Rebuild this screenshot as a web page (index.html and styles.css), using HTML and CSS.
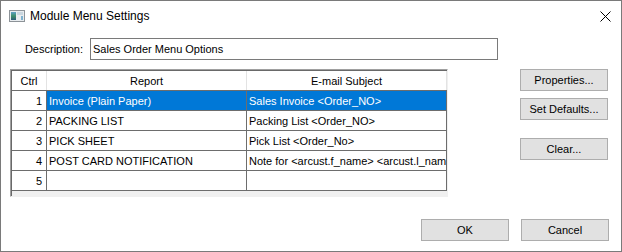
FILE: index.html
```html
<!DOCTYPE html>
<html lang="en">
<head>
  <meta charset="UTF-8">
  <title>Module Menu Settings</title>
  <link rel="stylesheet" href="styles.css">
</head>
<body>
  <div class="window">
    <div class="titlebar">
      <svg class="app-icon" width="16" height="12" viewBox="0 0 16 12">
        <defs>
          <linearGradient id="pane" x1="0" y1="0" x2="0" y2="1">
            <stop offset="0" stop-color="#5fa0c8"/>
            <stop offset="0.5" stop-color="#3d8f6a"/>
            <stop offset="1" stop-color="#2c5a7a"/>
          </linearGradient>
        </defs>
        <rect x="0.5" y="0.5" width="15" height="11" fill="#e8ecef" stroke="#8d9398"/>
        <rect x="2" y="2" width="5" height="8" fill="url(#pane)"/>
        <rect x="8" y="2" width="6" height="3" fill="#c9d6df"/>
        <rect x="12" y="6" width="2" height="4" fill="#7fb2cf"/>
      </svg>
      <span class="title">Module Menu Settings</span>
      <svg class="close" width="11" height="11" viewBox="0 0 11 11">
        <path d="M0.5 0.5 L10.5 10.5 M10.5 0.5 L0.5 10.5" stroke="#000" stroke-width="1"/>
      </svg>
    </div>

    <div class="content">
      <div class="desc-row">
        <label class="desc-label">Description:</label>
        <div class="textbox">Sales Order Menu Options</div>
      </div>

      <div class="main">
        <div class="grid">
          <table>
            <thead>
              <tr>
                <th class="col-ctrl">Ctrl</th>
                <th class="col-report">Report</th>
                <th class="col-subject">E-mail Subject</th>
              </tr>
            </thead>
            <tbody>
              <tr class="selected">
                <td class="num">1</td>
                <td>Invoice (Plain Paper)</td>
                <td>Sales Invoice &lt;Order_NO&gt;</td>
              </tr>
              <tr>
                <td class="num">2</td>
                <td>PACKING LIST</td>
                <td>Packing List &lt;Order_NO&gt;</td>
              </tr>
              <tr>
                <td class="num">3</td>
                <td>PICK SHEET</td>
                <td>Pick List &lt;Order_No&gt;</td>
              </tr>
              <tr>
                <td class="num">4</td>
                <td>POST CARD NOTIFICATION</td>
                <td>Note for &lt;arcust.f_name&gt; &lt;arcust.l_name&gt;</td>
              </tr>
              <tr>
                <td class="num">5</td>
                <td></td>
                <td></td>
              </tr>
            </tbody>
          </table>
        </div>

        <div class="side-buttons">
          <button class="btn">Properties...</button>
          <button class="btn">Set Defaults...</button>
          <button class="btn btn-apart">Clear...</button>
        </div>
      </div>

      <div class="footer">
        <button class="btn">OK</button>
        <button class="btn">Cancel</button>
      </div>
    </div>
  </div>
</body>
</html>
```

FILE: styles.css
```css
body {
  margin: 0;
  padding: 0;
  background-color: #fff;
  font-family: "Liberation Sans", Arial, sans-serif;
  font-size: 11px;
  color: #000;
}
.window {
  width: 622px;
  height: 252px;
  box-sizing: border-box;
  border: 1px solid #7a7a7a;
  background-color: #fff;
  display: flex;
  flex-direction: column;
}
.titlebar {
  height: 29px;
  display: flex;
  align-items: center;
  position: relative;
}
.app-icon {
  margin-left: 8px;
  margin-top: 1px;
}
.title {
  margin-left: 5px;
  font-size: 12px;
  margin-top: 1px;
}
.close {
  margin-left: auto;
  margin-right: 10px;
  margin-top: 1px;
}
.content {
  flex: 1;
  display: flex;
  flex-direction: column;
}
.desc-row {
  display: flex;
  align-items: center;
  margin-top: 8px;
  height: 22px;
}
.desc-label {
  width: 82px;
  text-align: right;
  margin-right: 7px;
}
.textbox {
  width: 408px;
  height: 22px;
  box-sizing: border-box;
  border: 1px solid #7a7a7a;
  padding: 0 2px;
  line-height: 20px;
  white-space: nowrap;
}
.main {
  display: flex;
  margin-top: 9px;
  padding-left: 9px;
}
.grid {
  width: 438px;
  height: 128px;
  box-sizing: border-box;
  border: 1px solid;
  border-color: #a0a0a0 #f0f0f0 #f0f0f0 #a0a0a0;
  box-shadow: inset 1px 1px 0 #696969;
  padding: 1px 0 0 1px;
  background-color: #f0f0f0;
  overflow: hidden;
}
.grid table {
  border-collapse: collapse;
  table-layout: fixed;
  width: 435px;
  background-color: #fff;
}
.grid th,
.grid td {
  height: 19px;
  padding: 0;
  white-space: nowrap;
  overflow: hidden;
  border-right: 1px solid #6d6d6d;
  border-bottom: 1px solid #6d6d6d;
  font-weight: normal;
}
.grid th {
  text-align: center;
  border-right-color: #e3e3e3;
}
.col-ctrl {
  width: 34px;
}
.col-report,
.col-subject {
  width: 199px;
}
.grid td {
  padding-left: 2px;
}
.grid td.num {
  text-align: right;
  padding: 0 4px 0 0;
}
.grid tr.selected td {
  background-color: #0078d7;
  color: #fff;
}
.grid tr.selected td.num {
  background-color: #fff;
  color: #000;
}
.side-buttons {
  display: flex;
  flex-direction: column;
  margin-left: 72px;
}
.btn {
  width: 88px;
  height: 22px;
  box-sizing: border-box;
  background-color: #e1e1e1;
  border: 1px solid #adadad;
  font-family: "Liberation Sans", Arial, sans-serif;
  font-size: 11px;
  color: #000;
  padding: 0;
  margin-bottom: 7px;
}
.btn-apart {
  margin-top: 11px;
}
.footer {
  display: flex;
  justify-content: flex-end;
  gap: 12px;
  margin-top: auto;
  margin-bottom: 10px;
  padding-right: 12px;
}
.footer .btn {
  margin-bottom: 0;
}
```
